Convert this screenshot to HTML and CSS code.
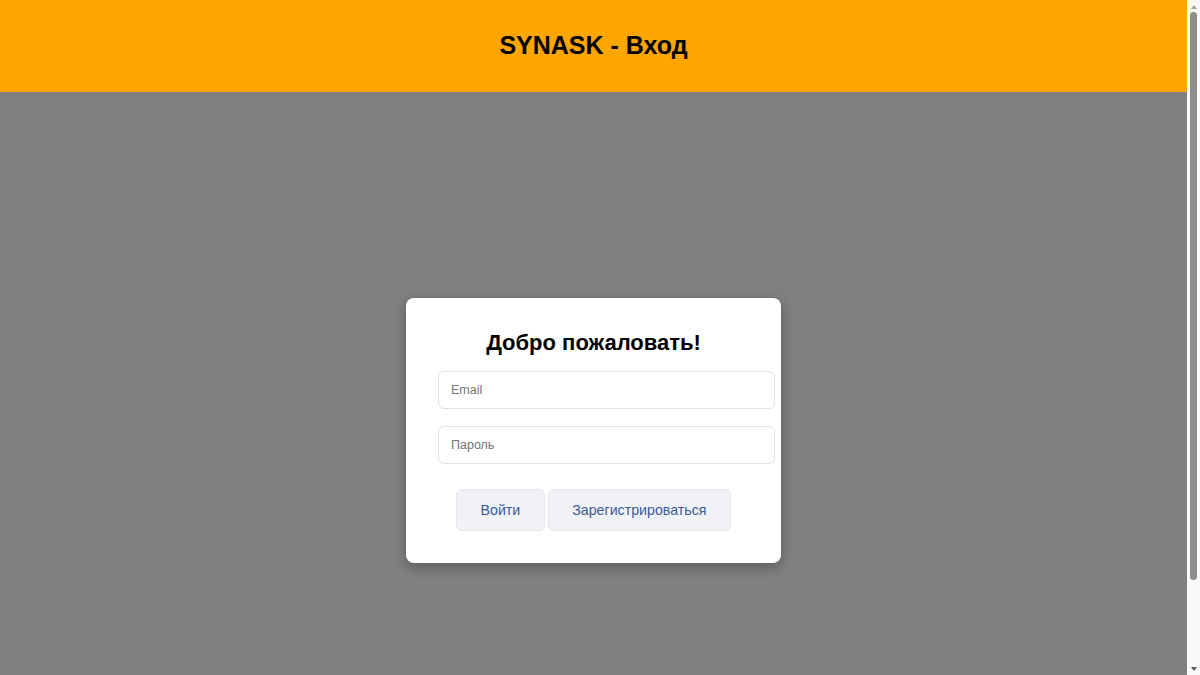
FILE: index.html
```html
<!DOCTYPE html>
<html lang="ru">
<head>
<meta charset="utf-8">
<title>SYNASK - Вход</title>
<link rel="stylesheet" href="styles.css">
</head>
<body>
<header class="topbar">
  <h1 class="topbar-title">SYNASK - Вход</h1>
</header>
<main class="page">
  <form class="card">
    <h2 class="card-title">Добро пожаловать!</h2>
    <input class="field" type="email" placeholder="Email">
    <input class="field" type="password" placeholder="Пароль">
    <div class="actions">
      <button class="btn" type="button">Войти</button>
      <button class="btn" type="button">Зарегистрироваться</button>
    </div>
  </form>
</main>
<div class="scrollbar" aria-hidden="true">
  <span class="sb-arrow sb-up"></span>
  <span class="sb-thumb"></span>
  <span class="sb-arrow sb-down"></span>
</div>
</body>
</html>
```
FILE: styles.css
```css
html, body {
  margin: 0;
  padding: 0;
}
html {
  scrollbar-width: none;
}
::-webkit-scrollbar {
  display: none;
}
body {
  font-family: "Liberation Sans", Arial, sans-serif;
  background: #808080;
  padding-right: 13px;
}
.topbar {
  background: #ffa500;
  padding: 31px 0 32px;
  text-align: center;
}
.topbar-title {
  margin: 0;
  font-size: 25px;
  line-height: 29px;
  font-weight: bold;
  color: #000;
}
.page {
  min-height: 100vh;
  padding-top: 1px;
  display: flex;
  align-items: center;
  justify-content: center;
}
.card {
  width: 311px;
  background: #fff;
  border-radius: 8px;
  padding: 32px;
  box-shadow: 0 4px 14px rgba(0, 0, 0, 0.3);
}
.card-title {
  margin: 0 0 15px;
  text-align: center;
  font-size: 22px;
  line-height: 26px;
  font-weight: bold;
  color: #000;
}
.field {
  display: block;
  width: 100%;
  box-sizing: content-box;
  margin: 0 0 17px;
  padding: 10px 12px;
  font-family: "Liberation Sans", Arial, sans-serif;
  font-size: 12.5px;
  line-height: 16px;
  border: 1px solid #dfe1e6;
  border-radius: 6px;
  outline: none;
  color: #222;
}
.field::placeholder {
  color: #757575;
}
.actions {
  display: flex;
  justify-content: center;
  gap: 3px;
  margin-top: 25px;
}
.btn {
  font-family: "Liberation Sans", Arial, sans-serif;
  font-size: 14.2px;
  line-height: 18px;
  padding: 11px 23.5px;
  color: #3c5a99;
  background: #f0f2f6;
  border: 1px solid #e3e6ec;
  border-radius: 6px;
  cursor: pointer;
}
.scrollbar {
  position: fixed;
  top: 0;
  right: 0;
  bottom: 0;
  width: 13px;
  background: #f9f9f9;
  display: flex;
  flex-direction: column;
  align-items: center;
  padding: 5px 0 4px;
  box-sizing: border-box;
}
.sb-arrow {
  width: 0;
  height: 0;
  border-left: 3.5px solid transparent;
  border-right: 3.5px solid transparent;
}
.sb-up {
  border-bottom: 4px solid #a3a3a3;
}
.sb-down {
  margin-top: auto;
  border-top: 4px solid #5c5c5c;
}
.sb-thumb {
  width: 7px;
  height: 568px;
  margin-top: 3px;
  background: #8e8e8e;
  border-radius: 4px;
}
```
